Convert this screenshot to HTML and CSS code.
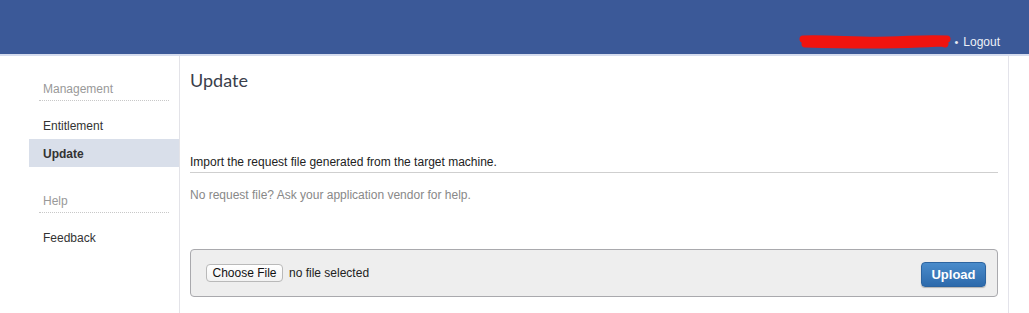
FILE: index.html
```html
<!DOCTYPE html>
<html>
<head>
<meta charset="utf-8">
<title>Update</title>
<link rel="stylesheet" href="styles.css">
</head>
<body>
<header class="topbar">
  <div class="user">
    <span class="user-name">
      <span class="user-text">user@example.com</span>
      <svg class="scribble" width="152" height="14" viewBox="0 0 152 14">
        <path d="M4 4 C30 3 60 6 90 5 S130 3 148 4 M6 9 C40 10 80 11 120 9 S140 8 146 9" fill="none" stroke="#f0140f" stroke-width="7" stroke-linecap="round"/>
      </svg>
    </span>
    <span class="dot">&bull;</span>
    <a class="logout" href="#">Logout</a>
  </div>
</header>
<div class="layout">
  <nav class="sidebar">
    <div class="nav-head">Management</div>
    <a class="nav-item" href="#">Entitlement</a>
    <a class="nav-item active" href="#">Update</a>
    <div class="nav-head gap">Help</div>
    <a class="nav-item" href="#">Feedback</a>
  </nav>
  <main class="main">
    <h1 class="title">Update</h1>
    <p class="lead">Import the request file generated from the target machine.</p>
    <p class="hint">No request file? Ask your application vendor for help.</p>
    <div class="panel">
      <div class="file">
        <button class="choose" type="button">Choose File</button>
        <span class="file-name">no file selected</span>
      </div>
      <button class="upload" type="button">Upload</button>
    </div>
  </main>
</div>
</body>
</html>
```
FILE: styles.css
```css
html, body {
  margin: 0;
  padding: 0;
  background: #fff;
  font-family: "Liberation Sans", Arial, sans-serif;
  font-size: 12px;
  color: #333;
}

.topbar {
  height: 54px;
  background: #3b5998;
  border-bottom: 2px solid #d5dcee;
  display: flex;
  justify-content: flex-end;
  align-items: flex-end;
  padding-right: 29px;
}

.user {
  display: flex;
  align-items: center;
  height: 14px;
  margin-bottom: 5px;
  color: #e6eaf3;
}

.user-name {
  position: relative;
  width: 152px;
  height: 14px;
  display: inline-block;
}

.user-text {
  display: block;
  color: #e6eaf3;
  font-size: 11px;
  line-height: 14px;
  padding-left: 4px;
  overflow: hidden;
  white-space: nowrap;
}

.scribble {
  position: absolute;
  left: 0;
  top: 0;
}

.dot {
  margin: 0 5px 0 3px;
  font-size: 11px;
}

.logout {
  color: #eef1f7;
  text-decoration: none;
  font-size: 12px;
}

.layout {
  display: flex;
  min-height: 257px;
  padding-left: 29px;
}

.sidebar {
  width: 150px;
  border-right: 1px solid #e3e3e8;
  padding-top: 25px;
  display: flex;
  flex-direction: column;
}

.nav-head {
  margin: 0 10px 10px;
  padding-left: 4px;
  line-height: 16px;
  padding-bottom: 3px;
  border-bottom: 1px dotted #c8c8c8;
  color: #999;
}

.nav-head.gap {
  margin-top: 26px;
}

.nav-item {
  display: block;
  height: 28px;
  line-height: 30px;
  padding-left: 14px;
  color: #333;
  text-decoration: none;
}

.nav-item.active {
  background: #d9dfea;
  font-weight: bold;
  color: #333;
}

.main {
  width: 808px;
  padding: 12px 10px 0;
  border-right: 1px solid #e3e3ea;
}

.title {
  margin: 0;
  font-family: Lato, "Open Sans", sans-serif;
  font-weight: normal;
  font-size: 18px;
  line-height: 24px;
  color: #3a404b;
}

.lead {
  margin: 62px 0 0;
  line-height: 16px;
  padding-bottom: 2px;
  border-bottom: 1px solid #cfcfcf;
  color: #222;
}

.hint {
  margin: 14px 0 0;
  line-height: 16px;
  color: #888;
}

.panel {
  margin-top: 46px;
  height: 46px;
  box-sizing: content-box;
  border: 1px solid #a9a9ad;
  border-radius: 4px;
  background: #eeeeee;
  display: flex;
  align-items: center;
  justify-content: space-between;
  padding: 0 11px 0 15px;
}

.file {
  display: flex;
  align-items: center;
  gap: 6px;
}

.choose {
  height: 18px;
  width: 77px;
  padding: 0;
  border: 1px solid #b9b9b9;
  border-radius: 4px;
  background: linear-gradient(#ffffff, #f2f2f2);
  font-family: "Liberation Sans", Arial, sans-serif;
  font-size: 12px;
  color: #111;
}

.file-name {
  color: #222;
}

.upload {
  width: 65px;
  height: 25px;
  margin-top: 2px;
  padding: 0;
  border: 1px solid #2c64a0;
  border-radius: 4px;
  background: linear-gradient(#4a8ccb, #2d6aac);
  color: #fff;
  font-family: "Liberation Sans", Arial, sans-serif;
  font-weight: bold;
  font-size: 13px;
  box-shadow: 0 1px 1px rgba(0,0,0,0.25);
}
```
